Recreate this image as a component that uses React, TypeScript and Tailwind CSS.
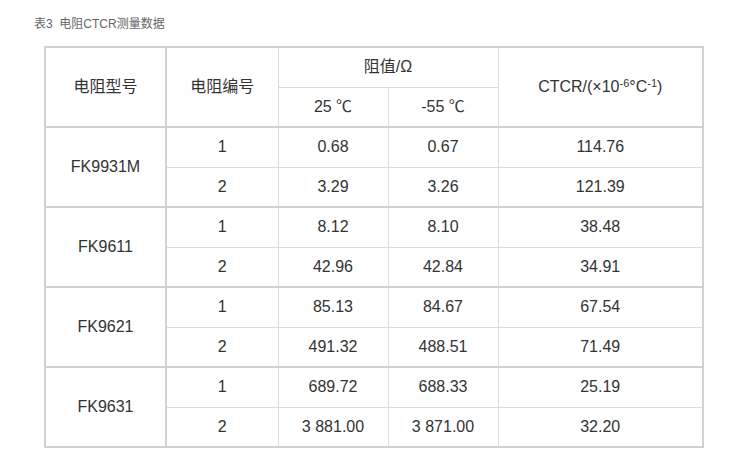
import React from 'react';

const groups = [
  { model: 'FK9931M', rows: [['1', '0.68', '0.67', '114.76'], ['2', '3.29', '3.26', '121.39']] },
  { model: 'FK9611', rows: [['1', '8.12', '8.10', '38.48'], ['2', '42.96', '42.84', '34.91']] },
  { model: 'FK9621', rows: [['1', '85.13', '84.67', '67.54'], ['2', '491.32', '488.51', '71.49']] },
  { model: 'FK9631', rows: [['1', '689.72', '688.33', '25.19'], ['2', '3 881.00', '3 871.00', '32.20']] },
];

const thin = 'border border-[#dcdcdc]';

const App: React.FC = () => {
  return (
    <div
      className="w-[739px] h-[466px] bg-white pt-[16px]"
      style={{ fontFamily: '"Liberation Sans", "Noto Sans CJK SC", sans-serif' }}
    >
      {/* Caption */}
      <div className="pl-[34px] text-[12px] leading-[16px] text-[#666]">表3&nbsp;&nbsp;电阻CTCR测量数据</div>

      {/* Table */}
      <table className="ml-[44px] mt-[14px] border-collapse border-2 border-[#d2d2d2] text-[16px] leading-[20px] text-[#333] text-center">
        <colgroup>
          <col className="w-[121px]" />
          <col className="w-[112px]" />
          <col className="w-[110px]" />
          <col className="w-[110px]" />
          <col className="w-[205px]" />
        </colgroup>
        <thead>
          <tr className="h-[40px]">
            <th rowSpan={2} className={`${thin} border-r-2 border-r-[#d2d2d2] border-b-2 border-b-[#d2d2d2] font-normal`}>电阻型号</th>
            <th rowSpan={2} className={`${thin} border-b-2 border-b-[#d2d2d2] font-normal`}>电阻编号</th>
            <th colSpan={2} className={`${thin} font-normal`}>阻值/Ω</th>
            <th rowSpan={2} className={`${thin} border-b-2 border-b-[#d2d2d2] font-normal`}>
              CTCR/(×10<sup className="text-[11px]">-6</sup>°C<sup className="text-[11px]">-1</sup>)
            </th>
          </tr>
          <tr className="h-[40px]">
            <th className={`${thin} border-b-2 border-b-[#d2d2d2] font-normal`}>25 ℃</th>
            <th className={`${thin} border-b-2 border-b-[#d2d2d2] font-normal`}>-55 ℃</th>
          </tr>
        </thead>
        <tbody>
          {groups.map((g, gi) =>
            g.rows.map((r, ri) => (
              <tr key={`${gi}-${ri}`} className="h-[40px]">
                {ri === 0 && (
                  <td rowSpan={2} className={`${thin} border-r-2 border-r-[#d2d2d2] border-b-2 border-b-[#d2d2d2]`}>
                    {g.model}
                  </td>
                )}
                {r.map((c, ci) => (
                  <td key={ci} className={`${thin} ${ri === 1 ? 'border-b-2 border-b-[#d2d2d2]' : ''}`}>
                    {c}
                  </td>
                ))}
              </tr>
            ))
          )}
        </tbody>
      </table>
    </div>
  );
};

export default App;
